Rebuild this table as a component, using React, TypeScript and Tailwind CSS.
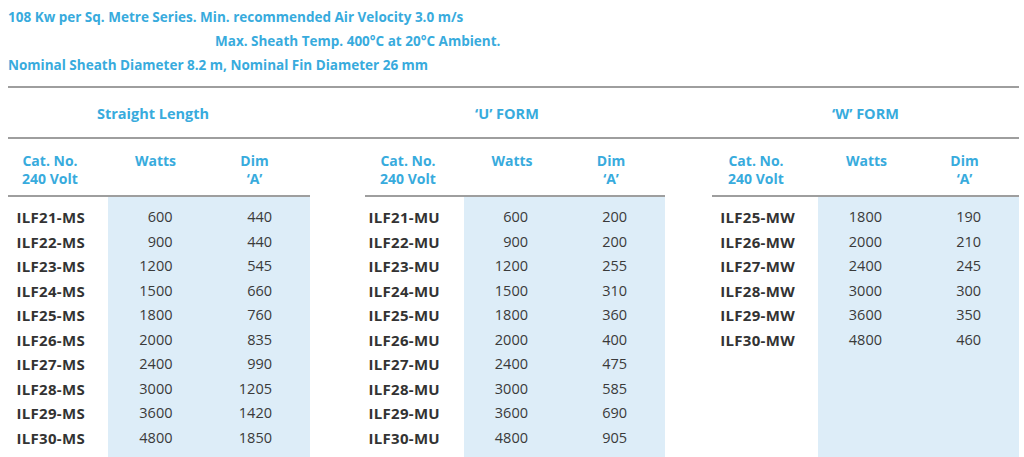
const sections = [
  {
    title: "Straight Length",
    titlePad: "pr-[12px]",
    width: "w-[302px]",
    margin: "ml-[8px]",
    catW: "w-[100px]",
    catHead: "pr-[16px]",
    catPad: "pr-[23px]",
    wattHead: "pr-[4px]",
    dimHead: "pr-[8px]",
    rows: [
      ["ILF21-MS", "600", "440"],
      ["ILF22-MS", "900", "440"],
      ["ILF23-MS", "1200", "545"],
      ["ILF24-MS", "1500", "660"],
      ["ILF25-MS", "1800", "760"],
      ["ILF26-MS", "2000", "835"],
      ["ILF27-MS", "2400", "990"],
      ["ILF28-MS", "3000", "1205"],
      ["ILF29-MS", "3600", "1420"],
      ["ILF30-MS", "4800", "1850"],
    ],
  },
  {
    title: "‘U’ FORM",
    titlePad: "pr-[16px]",
    width: "w-[300px]",
    margin: "ml-[55px]",
    catW: "w-[99px]",
    catHead: "pr-[13px]",
    catPad: "pr-[24px]",
    wattHead: "pr-[3px]",
    dimHead: "pr-[6px]",
    rows: [
      ["ILF21-MU", "600", "200"],
      ["ILF22-MU", "900", "200"],
      ["ILF23-MU", "1200", "255"],
      ["ILF24-MU", "1500", "310"],
      ["ILF25-MU", "1800", "360"],
      ["ILF26-MU", "2000", "400"],
      ["ILF27-MU", "2400", "475"],
      ["ILF28-MU", "3000", "585"],
      ["ILF29-MU", "3600", "690"],
      ["ILF30-MU", "4800", "905"],
    ],
  },
  {
    title: "‘W’ FORM",
    titlePad: "pr-0",
    width: "w-[307px]",
    margin: "ml-[47px]",
    catW: "w-[106px]",
    catHead: "pr-[18px]",
    catPad: "pr-[23px]",
    wattHead: "pr-[1px]",
    dimHead: "pr-[6px]",
    rows: [
      ["ILF25-MW", "1800", "190"],
      ["ILF26-MW", "2000", "210"],
      ["ILF27-MW", "2400", "245"],
      ["ILF28-MW", "3000", "300"],
      ["ILF29-MW", "3600", "350"],
      ["ILF30-MW", "4800", "460"],
    ],
  },
];

const font = { fontFamily: "'Open Sans', 'Liberation Sans', sans-serif" };

export default function App() {
  return (
    <div className="w-[1024px] h-[457px] overflow-hidden bg-white flex flex-col" style={font}>
      {/* intro */}
      <div className="pl-[8px] pt-[5px] text-[13.5px] font-bold leading-[24px] text-[#38abdd]">
        <p>108 Kw per Sq. Metre Series. Min. recommended Air Velocity 3.0 m/s</p>
        <p className="pl-[207px]">Max. Sheath Temp. 400°C at 20°C Ambient.</p>
        <p>Nominal Sheath Diameter 8.2 m, Nominal Fin Diameter 26 mm</p>
      </div>

      <div className="ml-[8px] mr-[5px] mt-[9px] border-t-2 border-[#9e9e9e]" />
      <div className="flex h-[49px] items-center pt-[2px]">
        {sections.map((s) => (
          <div key={s.title} className={`${s.width} ${s.margin} ${s.titlePad} text-center text-[14.5px] font-bold text-[#38abdd]`}>
            {s.title}
          </div>
        ))}
      </div>
      <div className="ml-[8px] mr-[5px] border-t-2 border-[#9e9e9e]" />

      <div className="flex flex-1">
        {sections.map((s) => (
          <div key={s.title} className={`${s.width} ${s.margin} flex flex-col`}>
            <div className="flex h-[56px] pt-[13px] text-[14px] font-bold leading-[18px] text-[#38abdd] text-center">
              <div className={`${s.catW} ${s.catHead}`}>
                Cat. No.
                <br />
                240 Volt
              </div>
              <div className={`flex-1 ${s.wattHead}`}>Watts</div>
              <div className={`flex-1 ${s.dimHead}`}>
                Dim
                <br />
                ‘A’
              </div>
            </div>
            <div className="border-t-2 border-[#9e9e9e]" />
            <div className="flex flex-1">
              <div className={`${s.catW} ${s.catPad} pt-[8px] text-right text-[15px] tracking-[0.3px] font-bold leading-[24.55px] text-[#333]`}>
                {s.rows.map((r) => (
                  <div key={r[0]}>{r[0]}</div>
                ))}
              </div>
              <div className="flex flex-1 bg-[#ddedf8] pt-[8px] text-[14.5px] font-medium leading-[24.55px] text-[#3a3a3a]">
                <div className="flex-1 pr-[35px] text-right">
                  {s.rows.map((r) => (
                    <div key={r[0]}>{r[1]}</div>
                  ))}
                </div>
                <div className="flex-1 pr-[38px] text-right">
                  {s.rows.map((r) => (
                    <div key={r[0]}>{r[2]}</div>
                  ))}
                </div>
              </div>
            </div>
          </div>
        ))}
      </div>
    </div>
  );
}
